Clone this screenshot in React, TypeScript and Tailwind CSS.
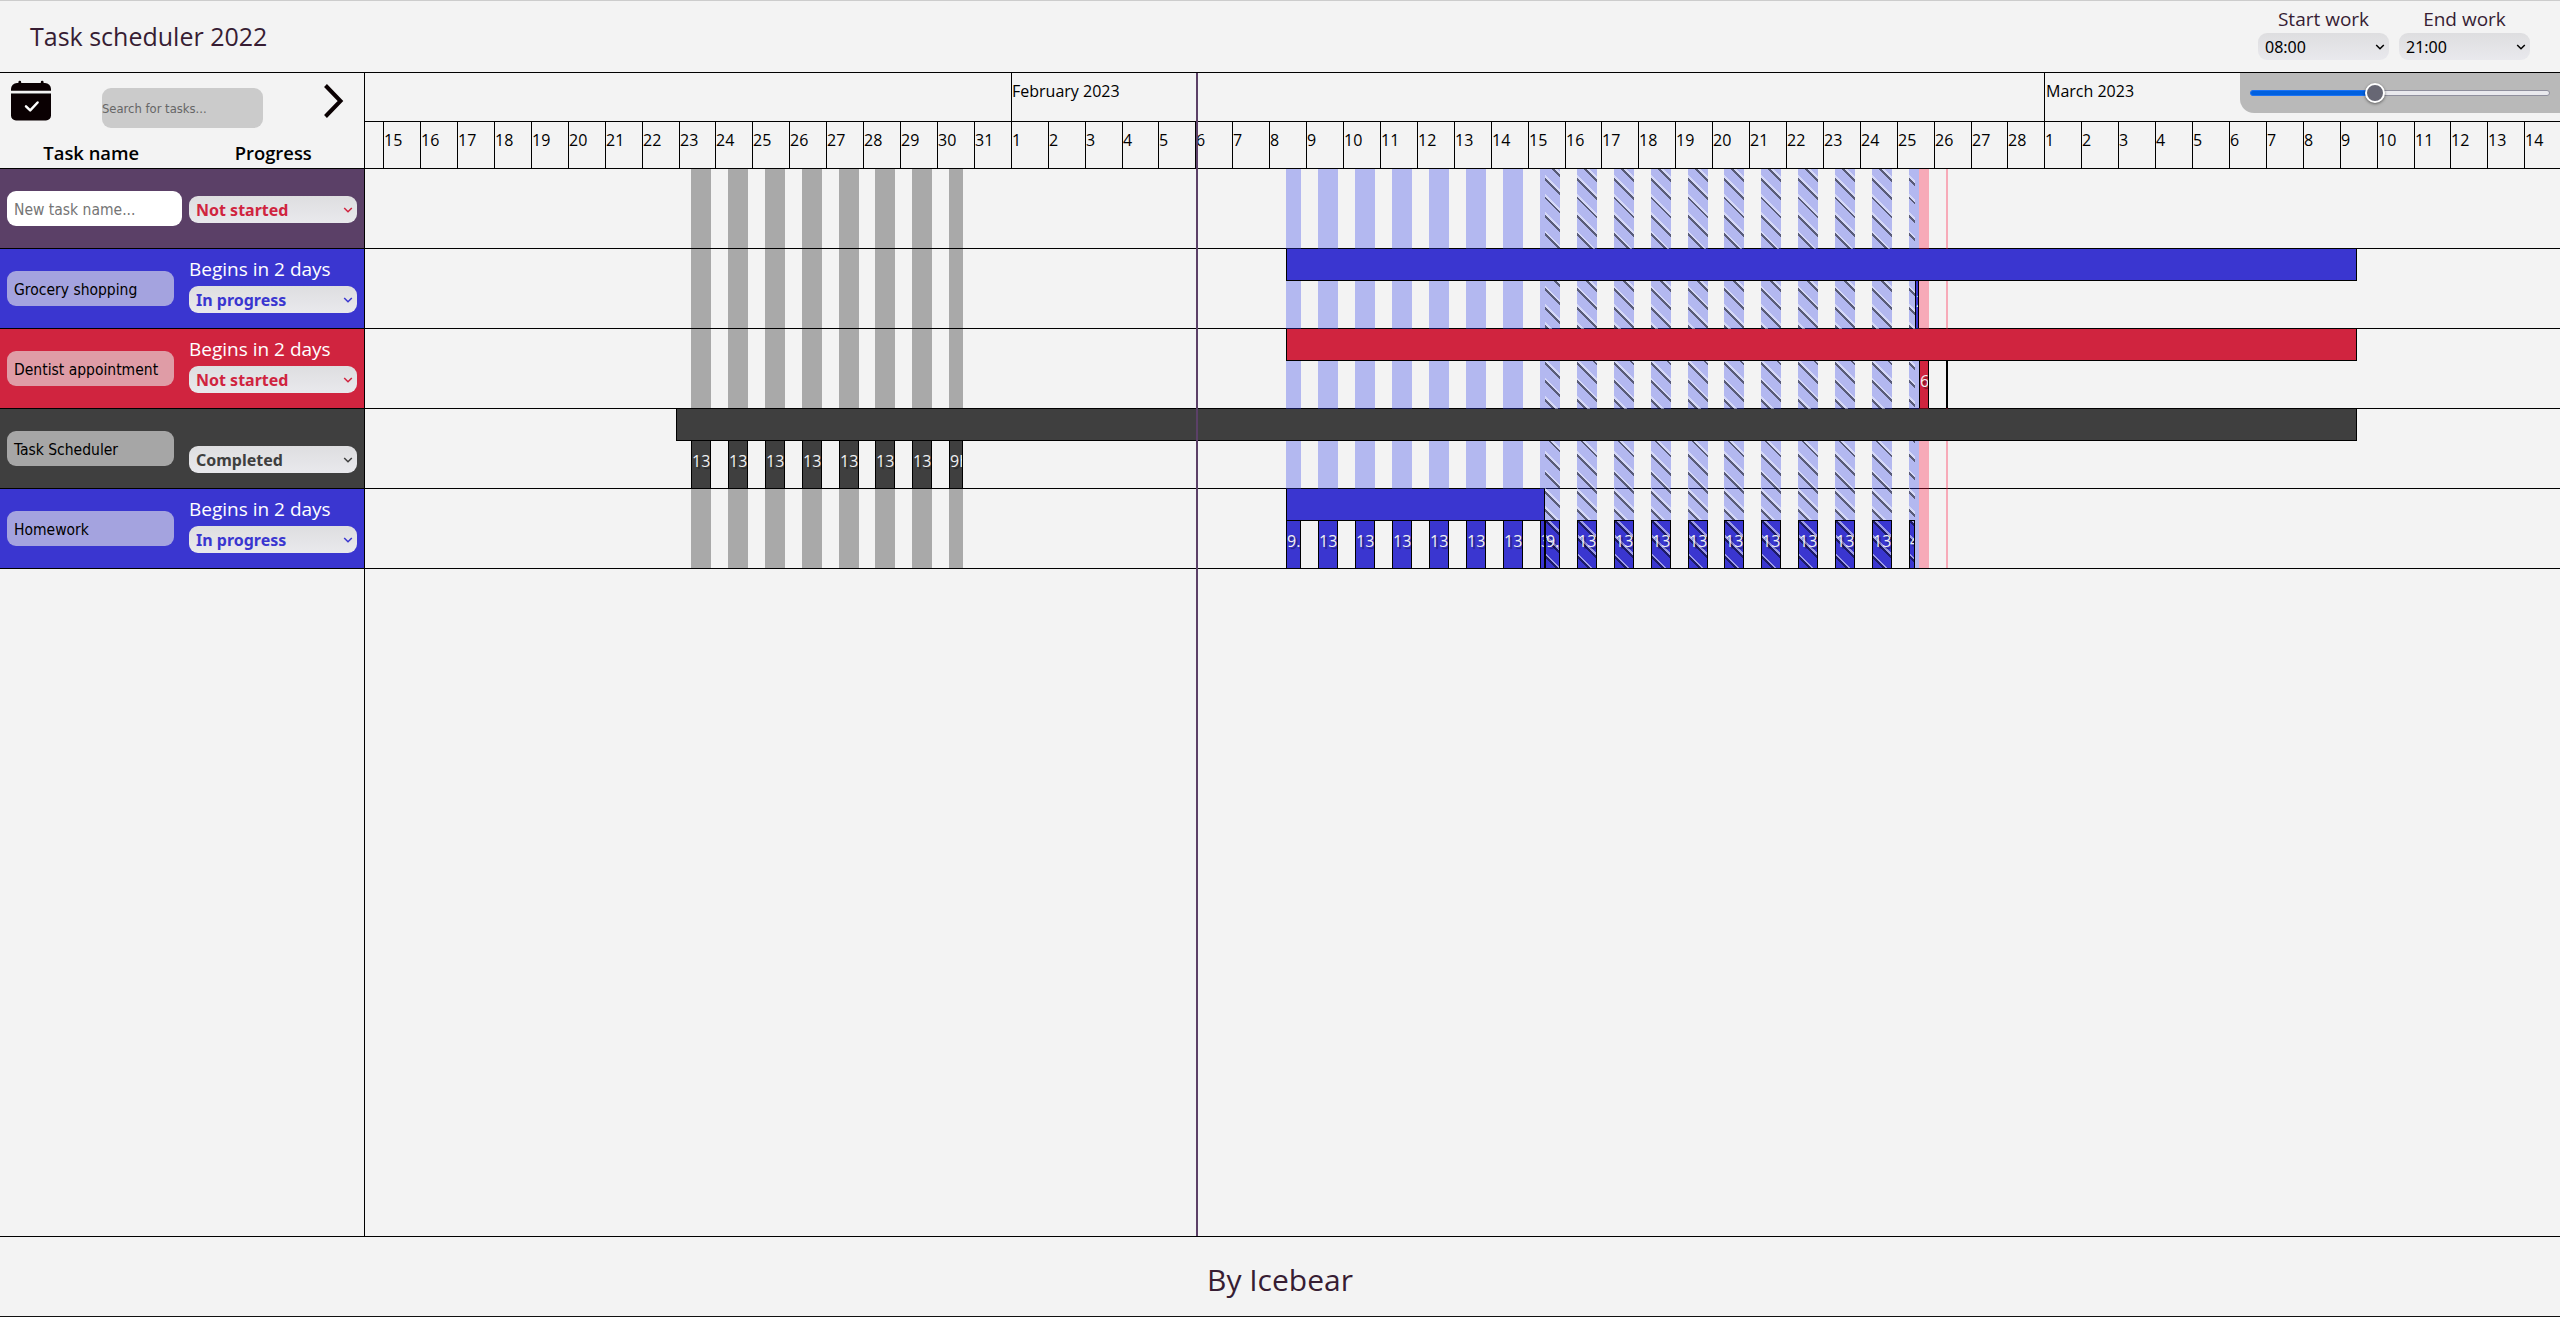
const TIMELINE_LEFT = 365;
const dayX = (i: number) => Math.round(641.62 + 36.9155 * i) - TIMELINE_LEFT;

type Day = { label: number; width: number };
const days: Day[] = [];
for (let i = -7; i <= 51; i++) {
  const label = i < 10 ? 22 + i : i < 38 ? i - 9 : i - 37;
  days.push({ label, width: dayX(i + 1) - dayX(i) });
}

type Tone = "purple" | "blue" | "red" | "dark";
type Block = { x: number; end: number; text: string; striped?: boolean };
type Task = {
  name: string;
  tone: Tone;
  status: string;
  note?: string;
  bar?: [number, number];
  blocks?: Block[];
};

const rowBg: Record<Tone, string> = {
  purple: "bg-[#5b4067]",
  blue: "bg-[#3a36d0]",
  red: "bg-[#d0243f]",
  dark: "bg-[#3f3f3f]",
};
const selectText: Record<string, string> = {
  "Not started": "text-[#d0243f]",
  "In progress": "text-[#3a36d0]",
  Completed: "text-[#3f3f3f]",
};

const grayDays: [number, number][] = [
  [691, 711], [728, 748], [765, 785], [802, 822], [839, 859], [875, 895], [912, 932], [949, 963],
];
const blueDays: [number, number][] = [
  [1286, 1301], [1318, 1338], [1355, 1375], [1392, 1412], [1429, 1449], [1466, 1486], [1503, 1523], [1540, 1545],
];
const stripedDays: [number, number][] = [
  [1545, 1560], [1577, 1597], [1614, 1634], [1651, 1671], [1688, 1708], [1724, 1744],
  [1761, 1781], [1798, 1818], [1835, 1855], [1872, 1892], [1909, 1915],
];
const pinkDays: [number, number][] = [[1919, 1929], [1946, 1948]];

const tasks: Task[] = [
  { name: "", tone: "purple", status: "Not started" },
  {
    name: "Grocery shopping", tone: "blue", status: "In progress", note: "Begins in 2 days",
    bar: [1286, 2357], blocks: [{ x: 1915, end: 1919, text: "2.5h" }],
  },
  {
    name: "Dentist appointment", tone: "red", status: "Not started", note: "Begins in 2 days",
    bar: [1286, 2357], blocks: [{ x: 1919, end: 1929, text: "6h" }, { x: 1946, end: 1948, text: "" }],
  },
  {
    name: "Task Scheduler", tone: "dark", status: "Completed",
    bar: [676, 2357],
    blocks: grayDays.map(([x, end], i) => ({ x, end, text: i === 7 ? "9h" : "13h" })),
  },
  {
    name: "Homework", tone: "blue", status: "In progress", note: "Begins in 2 days",
    bar: [1286, 1545],
    blocks: [
      ...blueDays.map(([x, end], i) => ({ x, end, text: i === 0 ? "9.5h" : i === 7 ? "3.5h" : "13h" })),
      ...stripedDays.map(([x, end], i) => ({ x, end, text: i === 0 ? "9.5h" : i === 10 ? "4h" : "13h", striped: true })),
    ],
  },
];

const COLUMN_STRIPES =
  "bg-[repeating-linear-gradient(45deg,transparent_0px,transparent_1px,rgba(0,0,0,0.5)_1px,rgba(0,0,0,0.5)_3px,rgba(255,255,255,0.45)_3px,rgba(255,255,255,0.45)_5px,transparent_5px,transparent_13px)]";
const BLOCK_STRIPES =
  "bg-[repeating-linear-gradient(45deg,transparent_0px,transparent_6.5px,rgba(0,0,0,0.5)_6.5px,rgba(0,0,0,0.5)_8.5px,rgba(255,255,255,0.5)_8.5px,rgba(255,255,255,0.5)_10.5px,transparent_10.5px,transparent_13px)]";

function Chevron() {
  return (
    <svg width="10" height="8" viewBox="0 0 10 8" fill="none" stroke="currentColor" strokeWidth="1.5" className="shrink-0">
      <path d="M1.2 2 L5 5.8 L8.8 2" />
    </svg>
  );
}

function Select({ value, className }: { value: string; className: string }) {
  return (
    <div
      className={`flex h-[27px] items-center justify-between rounded-[9px] bg-linear-to-b from-[#dedee0] to-[#e9e9ed] pr-1 pl-[7px] font-['Noto_Sans',sans-serif] text-[16px] leading-[27px] ${className}`}
    >
      <span className="pt-0.5 leading-[25px]">{value}</span>
      <Chevron />
    </div>
  );
}

function TaskCell({ task }: { task: Task }) {
  const isNew = task.name === "";
  return (
    <div className={`flex h-20 border-b border-black pl-[7px] ${rowBg[task.tone]}`}>
      <div className="w-[182px] pt-[22px]">
        <div
          className={`flex h-[35px] items-center rounded-[9px] pt-1 pl-[7px] font-['DejaVu_Sans_Condensed','DejaVu_Sans',sans-serif] text-[15.5px] ${
            isNew ? "w-[175px] bg-white text-[#757575]" : "w-[167px] bg-[rgba(232,232,232,0.61)] text-black"
          }`}
        >
          {isNew ? "New task name..." : task.name}
        </div>
      </div>
      <div className={`w-[168px] ${isNew ? "pt-[27px]" : "pt-[5px]"}`}>
        {!isNew && <div className="h-8 text-[19px] leading-[30px] text-white">{task.note}</div>}
        <Select value={task.status} className={`font-bold ${selectText[task.status]}`} />
      </div>
    </div>
  );
}

function Columns({ items, className }: { items: [number, number][]; className: string }) {
  return (
    <>
      {items.map(([x, end]) => (
        <div key={x} className={`absolute inset-y-0 ${className}`} style={{ left: x - TIMELINE_LEFT, width: end - x }} />
      ))}
    </>
  );
}

function TaskBars({ task }: { task: Task }) {
  return (
    <div className="relative h-20">
      {task.bar && (
        <div
          className={`absolute top-0 h-8 border-x border-b border-black ${rowBg[task.tone]}`}
          style={{ left: task.bar[0] - TIMELINE_LEFT, width: task.bar[1] - task.bar[0] }}
        />
      )}
      {task.blocks?.map((b) => (
        <div
          key={b.x}
          className={`absolute overflow-hidden border-x border-black ${rowBg[task.tone]} ${
            b.striped ? "top-[31px] h-12 border-t" : "top-8 h-[47px]"
          }`}
          style={{ left: b.x - TIMELINE_LEFT, width: b.end - b.x }}
        >
          <div
            className={`h-full pt-2 text-[16px] leading-[24px] whitespace-nowrap text-[#f0f0f0] [text-shadow:2px_2px_1px_rgba(0,0,0,0.4)] ${
              b.striped ? BLOCK_STRIPES : ""
            }`}
          >
            {b.text}
          </div>
        </div>
      ))}
    </div>
  );
}

function WorkTime({ label, value }: { label: string; value: string }) {
  return (
    <div className="w-[131px]">
      <div className="h-8 pt-1 text-center text-[19px] leading-[28px] text-[#371d33]">{label}</div>
      <Select value={value} className="text-black" />
    </div>
  );
}

export default function App() {
  return (
    <div className="flex h-[1317px] w-[2560px] flex-col overflow-hidden border-t border-b border-t-[#cccccc] border-b-[#111111] bg-[#f3f3f3] font-['Open_Sans',sans-serif] text-black">
      <header className="flex h-[72px] shrink-0 justify-between border-b border-black px-[30px]">
        <h1 className="text-[25px] leading-[71px] text-[#371d33]">Task scheduler 2022</h1>
        <div className="flex gap-2.5">
          <WorkTime label="Start work" value="08:00" />
          <WorkTime label="End work" value="21:00" />
        </div>
      </header>

      <main className="flex min-h-0 flex-1">
        <aside className="w-[365px] shrink-0 border-r border-black">
          <div className="flex h-24 flex-col border-b border-black">
            <div className="flex h-[62px] shrink-0 items-start pl-[11px]">
              <svg width="40" height="41" viewBox="0 0 40 41" className="mt-[7px]">
                <path fill="#0a0002" d="M7.4 3V2.2a1.4 1.4 0 0 1 2.8 0V3h19.6v-.8a1.4 1.4 0 0 1 2.8 0V3H34a6 6 0 0 1 6 6v1.7H0V9a6 6 0 0 1 6-6z" />
                <path fill="#0a0002" d="M0 13.5h40v22a5 5 0 0 1-5 5H5a5 5 0 0 1-5-5z" />
                <path d="M0 13.5h40" stroke="#777" strokeWidth="1" />
                <path d="M15 26.3l4.2 4L26.6 22.5" fill="none" stroke="#fff" strokeWidth="2.5" strokeLinecap="round" strokeLinejoin="round" />
              </svg>
              <div className="mt-[15px] ml-[51px] flex h-10 w-[161px] items-center rounded-[9px] bg-[#cbcbcb] pt-0.5 font-['DejaVu_Sans_Condensed','DejaVu_Sans',sans-serif] text-[12.9px] text-[#666666]">
                Search for tasks...
              </div>
              <svg width="22" height="36" viewBox="0 0 22 36" className="mt-[10px] ml-[60px]" fill="none" stroke="#0a0002" strokeWidth="4">
                <path d="M2.5 2.5 L17.5 18 L2.5 33.5" />
              </svg>
            </div>
            <div className="flex text-[18.4px] leading-[36px] font-semibold">
              <div className="w-[183px] text-center">Task name</div>
              <div className="w-[182px] text-center">Progress</div>
            </div>
          </div>
          {tasks.map((t) => (
            <TaskCell key={t.name} task={t} />
          ))}
        </aside>

        <section className="relative min-w-0 flex-1 overflow-hidden">
          <div className="flex h-[49px] border-b border-black text-[16px] leading-[36px]">
            <div style={{ width: dayX(10) }} />
            <div className="border-l border-black" style={{ width: dayX(38) - dayX(10) }}>
              February 2023
            </div>
            <div className="border-l border-black pl-px">March 2023</div>
          </div>
          <div className="flex h-[47px] overflow-hidden border-b border-black text-[16px] leading-[36px]">
            <div className="shrink-0" style={{ width: dayX(-7) }} />
            {days.map((d, i) => (
              <div key={i} className="shrink-0 border-l border-black" style={{ width: d.width }}>
                {d.label}
              </div>
            ))}
          </div>

          <div className="relative">
            {tasks.map((t) => (
              <div key={t.name} className="h-20 border-b border-black" />
            ))}
            <div className="absolute inset-x-0 top-0 bottom-px">
              <Columns items={grayDays} className="bg-black/30" />
              <Columns items={blueDays} className="bg-[rgba(49,64,234,0.33)]" />
              <Columns items={stripedDays} className={`bg-[rgba(49,64,234,0.33)] ${COLUMN_STRIPES}`} />
              <Columns items={[[1915, 1919]]} className="bg-[rgba(49,64,234,0.33)]" />
              <Columns items={pinkDays} className="bg-[rgba(255,22,64,0.33)]" />
            </div>
            <div className="absolute inset-x-0 top-0">
              {tasks.map((t) => (
                <TaskBars key={t.name} task={t} />
              ))}
            </div>
          </div>

          <div className="absolute inset-y-0 left-[831px] w-0.5 bg-[#5b4067]" />

          <div className="absolute top-0 right-0 flex h-10 w-80 items-center rounded-bl-[14px] bg-[#b9b9b9] pl-2.5">
            <div className="relative h-1.5 w-[300px] rounded-full border border-[#8f8f9d] bg-[#e9e9ed]">
              <div className="absolute -top-px -left-px h-1.5 w-[125px] rounded-l-full border border-[#1a72f5] bg-[#0060df]" />
              <div className="absolute -top-2 left-[114px] size-5 rounded-full border-2 border-white bg-[#676774] shadow-[0_1px_3px_rgba(0,0,0,0.5)]" />
            </div>
          </div>
        </section>
      </main>

      <footer className="h-20 shrink-0 border-t border-black text-center text-[30px] leading-[86px] text-[#371d33]">
        By Icebear
      </footer>
    </div>
  );
}
